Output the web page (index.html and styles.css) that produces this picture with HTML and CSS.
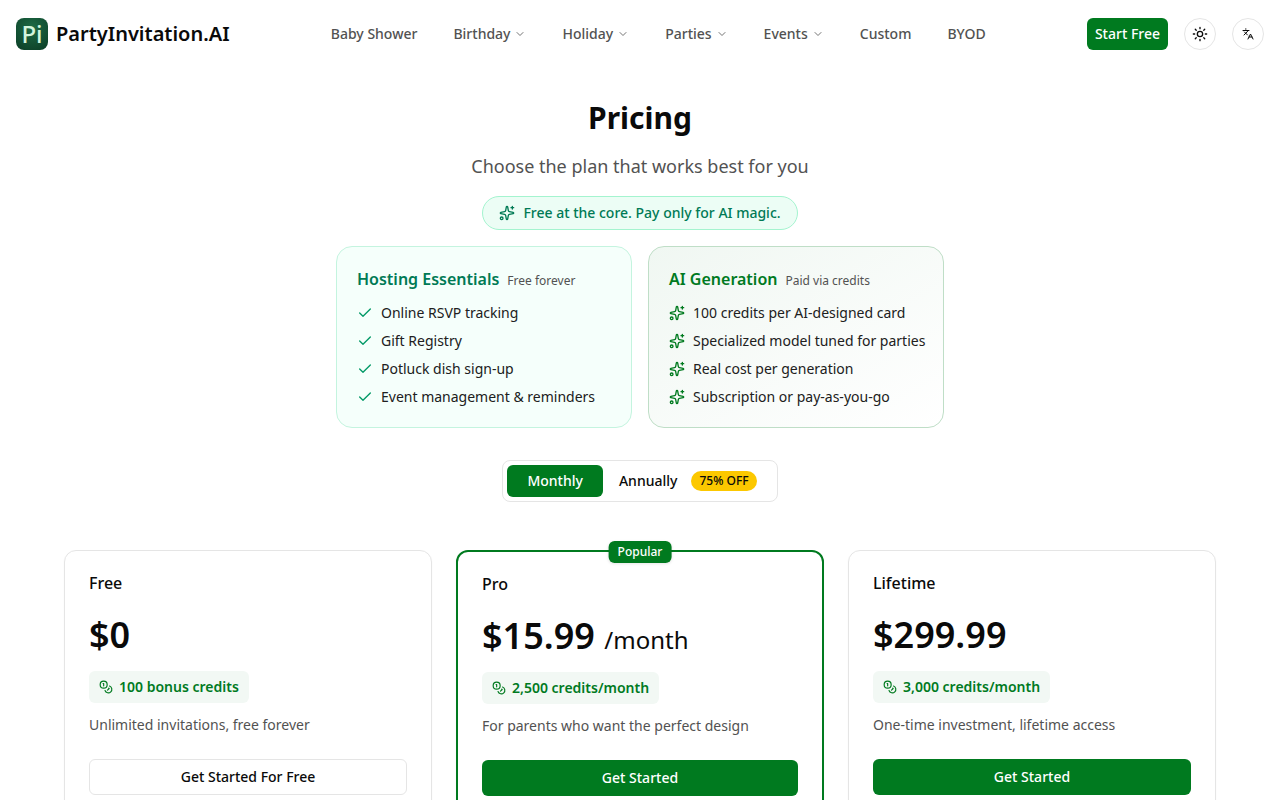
FILE: index.html
```html
<!DOCTYPE html>
<html lang="en">
<head>
  <meta charset="UTF-8">
  <title>Pricing | PartyInvitation.AI</title>
  <meta name="viewport" content="width=device-width, initial-scale=1.0">
  <link rel="stylesheet" href="styles.css">
</head>
<body>
  <!-- shared icons -->
  <svg class="sprite" aria-hidden="true">
    <symbol id="chevron" viewBox="0 0 24 24"><path d="m6 9 6 6 6-6"/></symbol>
    <symbol id="check" viewBox="0 0 24 24"><path d="M20 6 9 17l-5-5"/></symbol>
    <symbol id="sparkles" viewBox="0 0 24 24">
      <path d="M11.017 2.814a1 1 0 0 1 1.966 0l1.051 5.558a2 2 0 0 0 1.594 1.594l5.558 1.051a1 1 0 0 1 0 1.966l-5.558 1.051a2 2 0 0 0-1.594 1.594l-1.051 5.558a1 1 0 0 1-1.966 0l-1.051-5.558a2 2 0 0 0-1.594-1.594l-5.558-1.051a1 1 0 0 1 0-1.966l5.558-1.051a2 2 0 0 0 1.594-1.594z"/>
      <path d="M20 2v4M22 4h-4"/><circle cx="4" cy="20" r="2"/>
    </symbol>
    <symbol id="coins" viewBox="0 0 24 24">
      <circle cx="8" cy="8" r="6"/><path d="M18.09 10.37A6 6 0 1 1 10.34 18M7 6h1v4M16.71 13.88l.7.71-2.82 2.82"/>
    </symbol>
  </svg>

  <header class="header">
    <a class="brand" href="#"><span class="logo">Pi</span>PartyInvitation.AI</a>
    <nav class="nav">
      <a href="#">Baby Shower</a>
      <button type="button">Birthday <svg class="icon chevron"><use href="#chevron"/></svg></button>
      <button type="button">Holiday <svg class="icon chevron"><use href="#chevron"/></svg></button>
      <button type="button">Parties <svg class="icon chevron"><use href="#chevron"/></svg></button>
      <button type="button">Events <svg class="icon chevron"><use href="#chevron"/></svg></button>
      <a href="#">Custom</a>
      <a href="#">BYOD</a>
    </nav>
    <div class="actions">
      <a class="start" href="#">Start Free</a>
      <button class="round" type="button" aria-label="Toggle theme">
        <svg class="icon" viewBox="0 0 24 24"><circle cx="12" cy="12" r="4"/><path d="M12 2v2M12 20v2M4.93 4.93l1.41 1.41M17.66 17.66l1.41 1.41M2 12h2M20 12h2M6.34 17.66l-1.41 1.41M19.07 4.93l-1.41 1.41"/></svg>
      </button>
      <button class="round" type="button" aria-label="Language">
        <svg class="icon lang" viewBox="0 0 24 24"><path d="M2 5h12M7 2h1M5 8l6 6M4 14l6-6 2-3M22 22l-5-10-5 10M14 18h6"/></svg>
      </button>
    </div>
  </header>

  <main class="main">
    <section class="intro">
      <h1>Pricing</h1>
      <p class="subtitle">Choose the plan that works best for you</p>
      <p class="tagline"><svg class="icon"><use href="#sparkles"/></svg>Free at the core. Pay only for AI magic.</p>
    </section>

    <section class="features">
      <div class="feature hosting">
        <h2>Hosting Essentials <small>Free forever</small></h2>
        <ul>
          <li><svg class="icon"><use href="#check"/></svg>Online RSVP tracking</li>
          <li><svg class="icon"><use href="#check"/></svg>Gift Registry</li>
          <li><svg class="icon"><use href="#check"/></svg>Potluck dish sign-up</li>
          <li><svg class="icon"><use href="#check"/></svg>Event management &amp; reminders</li>
        </ul>
      </div>
      <div class="feature ai">
        <h2>AI Generation <small>Paid via credits</small></h2>
        <ul>
          <li><svg class="icon"><use href="#sparkles"/></svg>100 credits per AI-designed card</li>
          <li><svg class="icon"><use href="#sparkles"/></svg>Specialized model tuned for parties</li>
          <li><svg class="icon"><use href="#sparkles"/></svg>Real cost per generation</li>
          <li><svg class="icon"><use href="#sparkles"/></svg>Subscription or pay-as-you-go</li>
        </ul>
      </div>
    </section>

    <div class="billing" role="radiogroup" aria-label="Billing period">
      <input type="radio" name="period" id="monthly" checked>
      <label for="monthly">Monthly</label>
      <input type="radio" name="period" id="annually">
      <label class="annual" for="annually">Annually <span class="off">75% OFF</span></label>
    </div>

    <section class="plans">
      <article class="plan">
        <h3>Free</h3>
        <p class="price">$0</p>
        <p class="credits"><svg class="icon"><use href="#coins"/></svg>100 bonus credits</p>
        <p class="desc">Unlimited invitations, free forever</p>
        <button class="btn outline" type="button">Get Started For Free</button>
      </article>
      <article class="plan popular">
        <span class="ribbon">Popular</span>
        <h3>Pro</h3>
        <p class="price">$15.99 <span>/month</span></p>
        <p class="credits"><svg class="icon"><use href="#coins"/></svg>2,500 credits/month</p>
        <p class="desc">For parents who want the perfect design</p>
        <button class="btn" type="button">Get Started</button>
      </article>
      <article class="plan">
        <h3>Lifetime</h3>
        <p class="price">$299.99</p>
        <p class="credits"><svg class="icon"><use href="#coins"/></svg>3,000 credits/month</p>
        <p class="desc">One-time investment, lifetime access</p>
        <button class="btn" type="button">Get Started</button>
      </article>
    </section>
  </main>
</body>
</html>
```
FILE: styles.css
```css
* {
  box-sizing: border-box;
}

body {
  margin: 0;
  font-family: "Noto Sans", sans-serif;
  font-size: 14px;
  line-height: 20px;
  background: #fff;
  color: #0a0a0a;
}

h1, h2, h3, p, ul {
  margin: 0;
  padding: 0;
}

ul {
  list-style: none;
}

a {
  color: inherit;
  text-decoration: none;
}

button {
  font: inherit;
  color: inherit;
  background: none;
  border: none;
  padding: 0;
  cursor: pointer;
}

.sprite {
  display: none;
}

.icon {
  width: 16px;
  height: 16px;
  flex-shrink: 0;
  fill: none;
  stroke: currentColor;
  stroke-width: 2;
  stroke-linecap: round;
  stroke-linejoin: round;
}

/* header */
.header {
  display: flex;
  justify-content: space-between;
  align-items: center;
  padding: 18px 16px;
}

.brand {
  display: flex;
  align-items: center;
  gap: 8px;
  font-size: 20px;
  line-height: 28px;
  font-weight: 600;
}

.logo {
  width: 32px;
  height: 32px;
  border-radius: 8px;
  background: radial-gradient(circle at 50% 30%, #1d6b45, #0b3d26);
  color: #d3f5dc;
  font-size: 24px;
  line-height: 32px;
  font-weight: 500;
  text-align: center;
}

.nav {
  display: flex;
  align-items: center;
  gap: 36px;
  font-weight: 500;
  color: #525252;
}

.nav button {
  display: flex;
  align-items: center;
  gap: 4px;
}

.chevron {
  width: 12px;
  height: 12px;
  opacity: 0.8;
}

.actions {
  display: flex;
  align-items: center;
  gap: 16px;
}

.start {
  padding: 6px 8px;
  border-radius: 6px;
  background: #007a1f;
  color: #fff;
  font-weight: 500;
}

.round {
  display: flex;
  align-items: center;
  justify-content: center;
  width: 32px;
  height: 32px;
  border: 1px solid #e5e5e5;
  border-radius: 50%;
}

.lang {
  width: 12px;
  height: 12px;
}

/* intro */
.main {
  max-width: 1280px;
  margin: 0 auto;
  padding: 32px 64px 64px;
}

.intro {
  display: flex;
  flex-direction: column;
  align-items: center;
  gap: 16px;
  text-align: center;
}

.intro h1 {
  font-size: 30px;
  line-height: 36px;
  font-weight: 700;
}

.subtitle {
  font-size: 18px;
  line-height: 28px;
  color: #525252;
}

.tagline {
  display: flex;
  align-items: center;
  gap: 8px;
  padding: 6px 16px;
  border: 1px solid #a4f4cf;
  border-radius: 999px;
  background: #ecfdf5;
  color: #007a55;
  font-weight: 500;
}

.features {
  display: grid;
  grid-template-columns: repeat(2, minmax(0, 1fr));
  gap: 16px;
  max-width: 608px;
  margin: 16px auto 32px;
}

.feature {
  padding: 20px;
  border: 1px solid #c4f4df;
  border-radius: 16px;
}

.feature h2 {
  display: flex;
  align-items: baseline;
  gap: 8px;
  margin-bottom: 12px;
  font-size: 16px;
  line-height: 24px;
  font-weight: 600;
}

.feature small {
  font-size: 12px;
  line-height: 16px;
  font-weight: 400;
  color: #525252;
}

.feature ul {
  display: grid;
  gap: 8px;
}

.feature li {
  display: flex;
  align-items: center;
  gap: 8px;
  color: #202020;
  white-space: nowrap;
}

.hosting {
  background: #f5fffb;
}

.hosting h2 {
  color: #007a55;
}

.hosting .icon {
  color: #009966;
}

.ai {
  border-color: #bfdec7;
  background: linear-gradient(to bottom right, #f0f7f2, #fff);
}

.ai h2,
.ai .icon {
  color: #007a1f;
}

/* monthly / annually switch */
.billing {
  display: flex;
  width: fit-content;
  margin: 0 auto 48px;
  padding: 4px;
  border: 1px solid #e5e5e5;
  border-radius: 8px;
  font-weight: 500;
}

.billing input {
  position: absolute;
  opacity: 0;
  pointer-events: none;
}

.billing label {
  display: flex;
  align-items: center;
  height: 32px;
  padding: 0 20px;
  border-radius: 6px;
  cursor: pointer;
}

.billing .annual {
  gap: 14px;
  padding: 0 16px;
}

.billing input:checked + label {
  background: #007a1f;
  color: #fff;
}

.off {
  padding: 2px 8px;
  border-radius: 999px;
  background: #fcc800;
  color: #0a0a0a;
  font-size: 12px;
  line-height: 16px;
}

/* plans */
.plans {
  display: grid;
  grid-template-columns: repeat(3, 1fr);
  gap: 24px;
}

.plan {
  position: relative;
  padding: 24px;
  border: 1px solid #e5e5e5;
  border-radius: 12px;
  box-shadow: 0 1px 2px rgba(0, 0, 0, 0.04);
}

.popular {
  border: 2px solid #007a1f;
}

.ribbon {
  position: absolute;
  top: -11px;
  left: 50%;
  transform: translateX(-50%);
  padding: 3px 9px;
  border-radius: 6px;
  background: #007a1f;
  color: #fff;
  font-size: 12px;
  line-height: 16px;
  font-weight: 500;
  box-shadow: 0 1px 3px rgba(0, 0, 0, 0.1);
}

.plan h3 {
  font-size: 16px;
  line-height: 16px;
  font-weight: 500;
}

.price {
  margin: 24px 0 16px;
  font-size: 36px;
  line-height: 40px;
  font-weight: 600;
}

.price span {
  font-size: 24px;
  line-height: 24px;
  font-weight: 400;
}

.credits {
  display: flex;
  align-items: center;
  gap: 6px;
  width: fit-content;
  padding: 6px 10px;
  border-radius: 6px;
  background: #f2f8f4;
  color: #007a1f;
  font-weight: 600;
}

.credits .icon {
  width: 14px;
  height: 14px;
}

.desc {
  margin: 12px 0 24px;
  color: #525252;
}

.btn {
  width: 100%;
  height: 36px;
  border-radius: 6px;
  background: #007a1f;
  color: #fff;
  font-weight: 500;
}

.outline {
  border: 1px solid #e5e5e5;
  background: #fff;
  color: #0a0a0a;
}

@media (max-width: 900px) {
  .header {
    flex-wrap: wrap;
    gap: 16px;
  }
  .nav {
    flex-wrap: wrap;
    gap: 16px;
  }
  .main {
    padding: 32px 16px;
  }
  .features,
  .plans {
    grid-template-columns: 1fr;
  }
}
```
